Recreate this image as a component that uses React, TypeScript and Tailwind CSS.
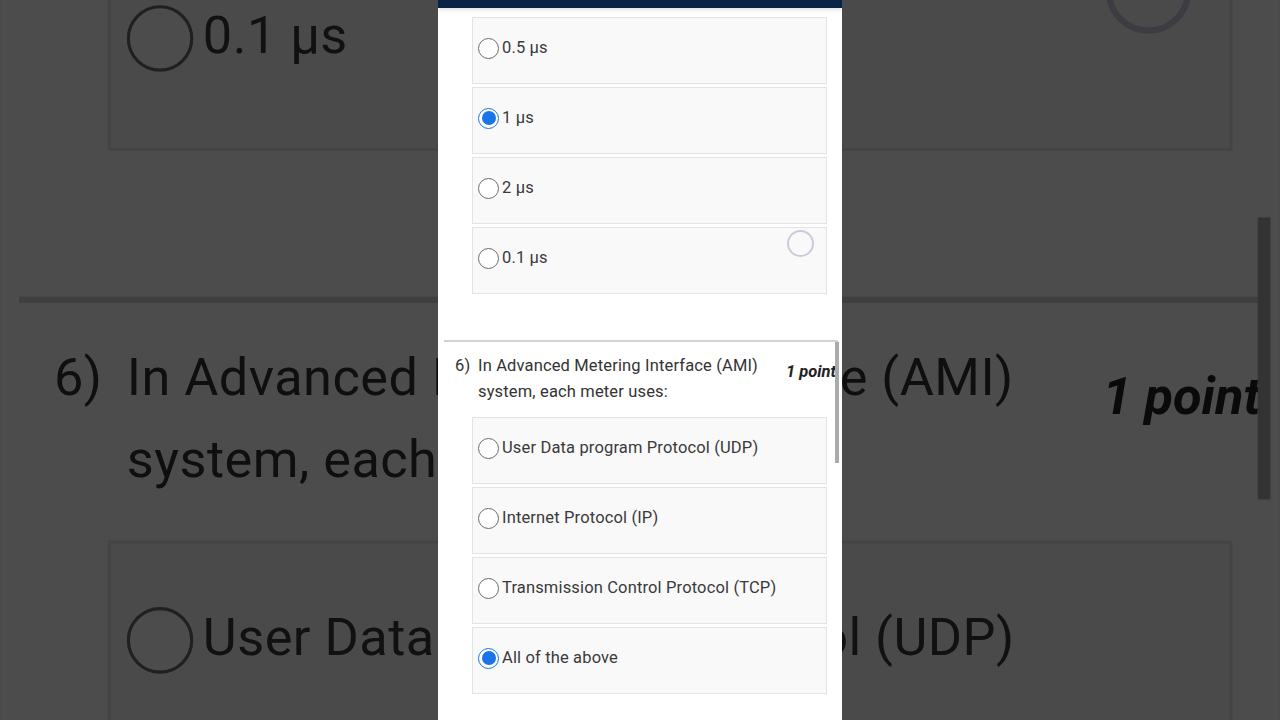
import React from "react";

interface Option {
  label: string;
  checked?: boolean;
}

const firstOptions: Option[] = [
  { label: "0.5 μs" },
  { label: "1 μs", checked: true },
  { label: "2 μs" },
  { label: "0.1 μs" },
];

const secondOptions: Option[] = [
  { label: "User Data program Protocol (UDP)" },
  { label: "Internet Protocol (IP)" },
  { label: "Transmission Control Protocol (TCP)" },
  { label: "All of the above", checked: true },
];

function Radio({ checked }: { checked?: boolean }) {
  if (checked) {
    return (
      <span className="w-[21px] h-[21px] shrink-0 rounded-full border-[1.5px] border-[#1a73e8] bg-white flex items-center justify-center">
        <span className="w-[14px] h-[14px] rounded-full bg-[#1a73e8]" />
      </span>
    );
  }
  return <span className="w-[21px] h-[21px] shrink-0 rounded-full border-[1.5px] border-[#6b6b6b] bg-white" />;
}

function OptionBox({ option }: { option: Option }) {
  return (
    <div className="h-[67px] border border-[#e3e3e3] bg-[#f9f9f9] pl-[5px] pt-[19px]">
      <div className="flex items-center gap-[3px]">
        <Radio checked={option.checked} />
        <span className="text-[16.5px] tracking-[0.15px] leading-[22px] text-[#3a3a3a]">{option.label}</span>
      </div>
    </div>
  );
}

function Panel({ barTop, barHeight }: { barTop: number; barHeight: number }) {
  return (
    <div className="relative w-[404px] h-[720px] shrink-0 bg-white overflow-hidden font-['Roboto','Liberation_Sans',sans-serif]">
      <div className="h-[8px] bg-[#0b2347] shadow-[0_2px_4px_rgba(0,0,0,0.12)]" />

      <div className="flex flex-col gap-[3px] pt-[9px] ml-[34px] w-[355px]">
        {firstOptions.map((o) => (
          <OptionBox key={o.label} option={o} />
        ))}
      </div>

      <div className="mt-[46px] ml-[6px] mr-[4px] h-[2px] bg-[#d2d2d2]" />

      <div className="flex pt-[11px] pl-[17px]">
        <span className="w-[23px] text-[16.5px] tracking-[0.15px] leading-[26px] text-[#333]">6)</span>
        <p className="w-[300px] text-[16.5px] tracking-[0.15px] leading-[26px] text-[#333]">
          In Advanced Metering Interface (AMI) system, each meter uses:
        </p>
        <span className="ml-[8px] mt-[9px] text-[16.5px] leading-[20px] font-bold italic text-[#222] whitespace-nowrap">
          1 point
        </span>
      </div>

      <div className="flex flex-col gap-[3px] mt-[12px] ml-[34px] w-[355px]">
        {secondOptions.map((o) => (
          <OptionBox key={o.label} option={o} />
        ))}
      </div>

      {/* touch indicator */}
      <div className="absolute left-[349px] top-[230px] w-[27px] h-[27px] rounded-full border-2 border-[#c9cbdd]" />

      {/* scrollbar */}
      <div
        className="absolute right-[3px] w-[4px] bg-[#ababab]"
        style={{ top: barTop, height: barHeight }}
      />
    </div>
  );
}

export default function App() {
  return (
    <div className="relative w-[1280px] h-[720px] overflow-hidden bg-[#4b4b4b]">
      <div className="absolute inset-0 flex items-center justify-center">
        <div className="scale-[3.168]">
          <Panel barTop={315} barHeight={89} />
        </div>
      </div>
      <div className="absolute inset-0 bg-black/[0.7]" />
      <div className="relative flex justify-center">
        <Panel barTop={342} barHeight={121} />
      </div>
    </div>
  );
}
